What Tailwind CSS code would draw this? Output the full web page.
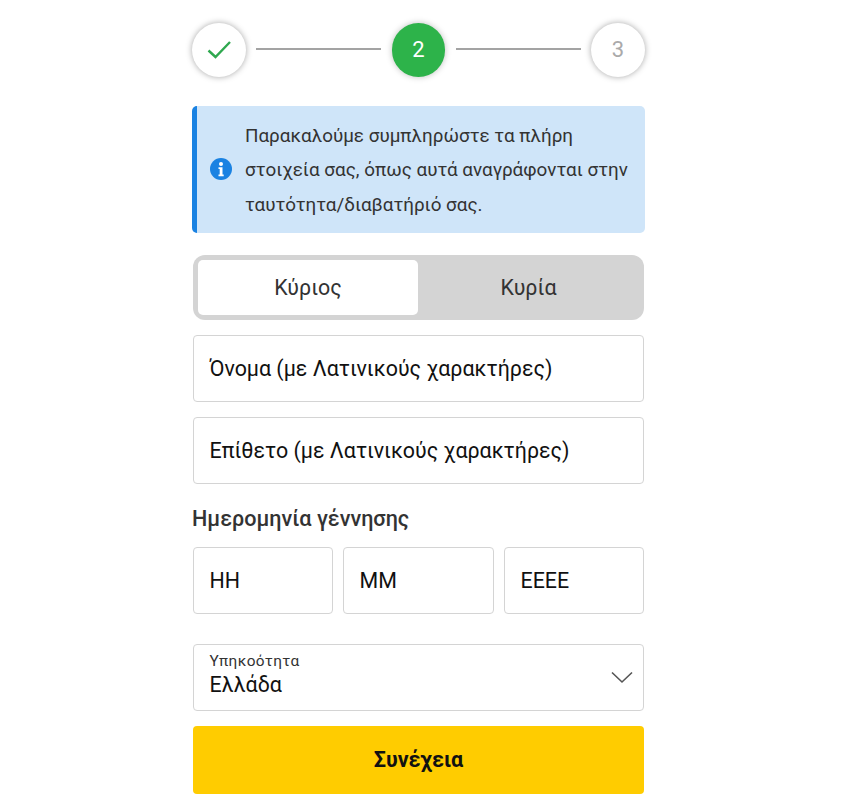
<!DOCTYPE html>
<html lang="el">
<head>
    <meta charset="UTF-8">
    <title>Στοιχεία</title>
    <script src="https://cdn.jsdelivr.net/npm/@tailwindcss/browser@4"></script>
</head>
<body class="bg-white font-['Roboto',sans-serif] text-[#333]">
<div class="ml-[192px] w-[453px] pt-[22px]">

    <!-- stepper -->
    <div class="flex items-center h-[55px]">
        <div class="w-[54px] h-[54px] rounded-full bg-white shadow-[0_0_6px_rgba(0,0,0,0.35)] flex items-center justify-center shrink-0">
            <svg width="26" height="22" viewBox="0 0 26 22" fill="none" stroke="#2fa84f" stroke-width="2.4"><path d="M2.5 11.5l7 6.5L24 3"/></svg>
        </div>
        <div class="w-[125px] h-[2px] bg-[#a3a3a3] ml-[10px] mr-[11px] -mt-[2px]"></div>
        <div class="w-[53px] h-[54px] rounded-full bg-[#2db34a] shadow-[0_0_6px_rgba(0,0,0,0.25)] flex items-center justify-center text-white text-[22px] shrink-0">2</div>
        <div class="w-[125px] h-[2px] bg-[#a3a3a3] ml-[11px] mr-[10px] -mt-[2px]"></div>
        <div class="w-[54px] h-[54px] rounded-full bg-white shadow-[0_0_6px_rgba(0,0,0,0.35)] flex items-center justify-center text-[#aaa] text-[22px] shrink-0">3</div>
    </div>

    <!-- info -->
    <div class="mt-[29px] h-[127px] flex items-center bg-[#cfe5f9] border-l-[5px] border-[#1a82e2] rounded-[5px] pl-[13px]">
        <svg class="shrink-0 -mt-px" width="22" height="22" viewBox="0 0 22 22">
            <circle cx="11" cy="11" r="11" fill="#1a82e2"/>
            <circle cx="11" cy="6" r="2" fill="#fff"/>
            <path d="M8.5 9.3h4v7.2h1.2v1.7H8.5v-1.7h1.2v-5.5H8.5z" fill="#fff"/>
        </svg>
        <p class="ml-[13px] pt-[2px] text-[18.85px] leading-[34.5px] text-[#333] whitespace-nowrap">Παρακαλούμε συμπληρώστε τα πλήρη<br>στοιχεία σας, όπως αυτά αναγράφονται στην<br>ταυτότητα/διαβατήριό σας.</p>
    </div>

    <div class="px-px">
        <!-- title toggle -->
        <div class="mt-[22px] h-[65px] bg-[#d4d4d4] rounded-[12px] p-[5px] flex text-[21.4px] text-[#333]">
            <div class="w-[220px] bg-white rounded-[5px] flex items-center justify-center pt-px">Κύριος</div>
            <div class="flex-1 flex items-center justify-center pt-px">Κυρία</div>
        </div>

        <div class="mt-[15px] h-[67px] border border-[#d4d4d4] rounded-[4px] flex items-center pl-[15.5px] pt-px text-[21.4px] text-[#111]">Όνομα (με Λατινικούς χαρακτήρες)</div>
        <div class="mt-[15px] h-[67px] border border-[#d4d4d4] rounded-[4px] flex items-center pl-[15.5px] pt-px text-[21.4px] text-[#111]">Επίθετο (με Λατινικούς χαρακτήρες)</div>
    </div>

    <div class="mt-[21px] h-[28px] leading-[28px] text-[21.6px] font-medium text-[#333]">Ημερομηνία γέννησης</div>

    <div class="px-px">
        <div class="mt-[14px] flex gap-[10px] text-[21.4px] text-[#111]">
            <div class="w-[140px] h-[67px] border border-[#d4d4d4] rounded-[4px] flex items-center pl-[15.5px] pt-px">ΗΗ</div>
            <div class="w-[151px] h-[67px] border border-[#d4d4d4] rounded-[4px] flex items-center pl-[15.5px] pt-px">ΜΜ</div>
            <div class="w-[140px] h-[67px] border border-[#d4d4d4] rounded-[4px] flex items-center pl-[15.5px] pt-px">ΕΕΕΕ</div>
        </div>

        <div class="relative mt-[30px] h-[67px] border border-[#d4d4d4] rounded-[4px] pl-[15.5px] pt-[7px]">
            <div class="text-[15.4px] leading-[18px] tracking-[0.4px] text-[#333]">Υπηκοότητα</div>
            <div class="text-[21.4px] leading-[28px] pt-px text-[#111]">Ελλάδα</div>
            <svg class="absolute right-[10px] top-[26px]" width="22" height="13" viewBox="0 0 22 13" fill="none" stroke="#555" stroke-width="1.6"><path d="M1 1.5l10 9.5 10-9.5"/></svg>
        </div>

        <div class="mt-[15px] h-[68px] bg-[#ffcc00] rounded-[4px] flex items-center justify-center pt-px text-[21.5px] font-bold text-[#111]">Συνέχεια</div>
    </div>
</div>
</body>
</html>
